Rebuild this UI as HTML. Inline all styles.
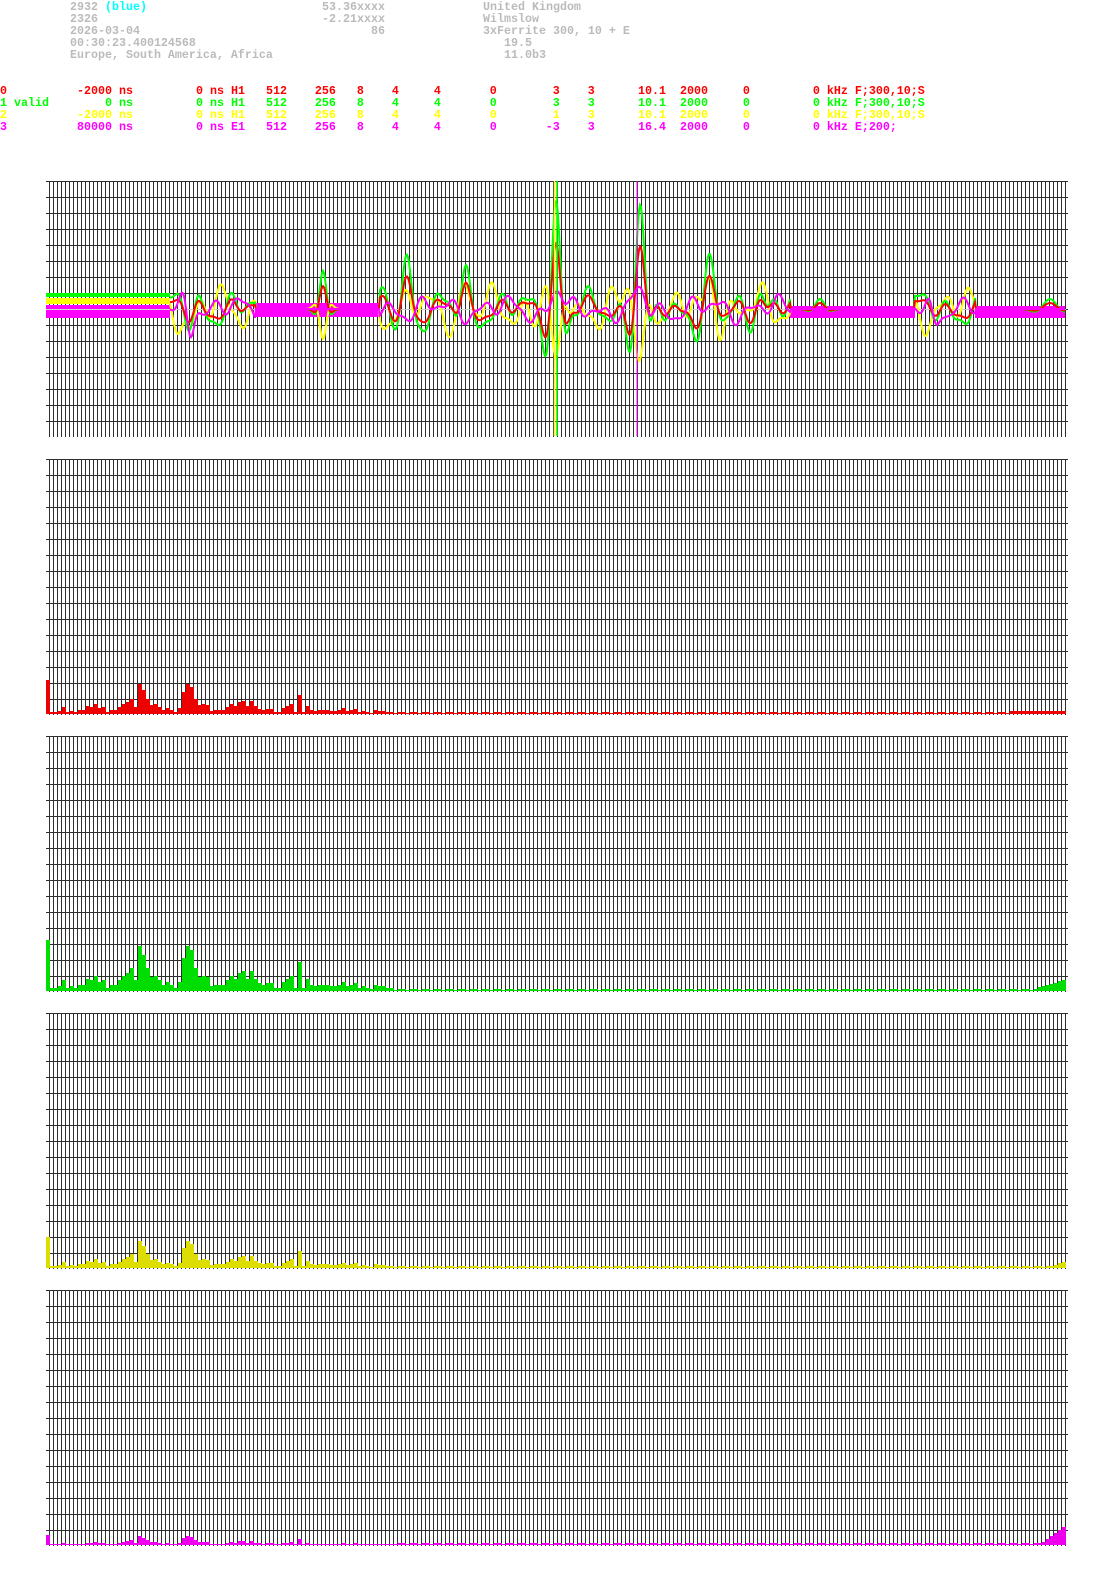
<!DOCTYPE html>
<html><head><meta charset="utf-8"><style>
html,body{margin:0;padding:0;background:#fff;width:1095px;height:1571px;overflow:hidden}
.t{position:absolute;font-family:"Liberation Mono",monospace;font-weight:bold;font-size:11.67px;line-height:12px;white-space:pre}
.g{color:#bbb}
svg{position:absolute;left:0;top:0}
</style></head><body>
<svg id="s" width="1095" height="1571" xmlns="http://www.w3.org/2000/svg"></svg>
<div class="t g" style="left:70px;top:1px">2932 <span style="color:#0ff">(blue)</span>
2326
2026-03-04
00:30:23.400124568
Europe, South America, Africa</div>
<div class="t g" style="left:322px;top:1px">53.36xxxx
-2.21xxxx
       86</div>
<div class="t g" style="left:483px;top:1px">United Kingdom
Wilmslow
3xFerrite 300, 10 + E
   19.5
   11.0b3</div>
<div class="t" style="left:0;top:85px"><span style="color:#f00">0</span>
<span style="color:#0f0">1 valid</span>
<span style="color:#ff0">2</span>
<span style="color:#f0f">3</span></div>
<div class="t" style="left:77px;top:85px;color:#f00">-2000 ns</div>
<div class="t" style="left:77px;top:97px;color:#0f0">    0 ns</div>
<div class="t" style="left:77px;top:109px;color:#ff0">-2000 ns</div>
<div class="t" style="left:77px;top:121px;color:#f0f">80000 ns</div>
<div class="t" style="left:196px;top:85px;color:#f00">0 ns H1   512    256   8    4     4       0        3    3</div>
<div class="t" style="left:196px;top:97px;color:#0f0">0 ns H1   512    256   8    4     4       0        3    3</div>
<div class="t" style="left:196px;top:109px;color:#ff0">0 ns H1   512    256   8    4     4       0        1    3</div>
<div class="t" style="left:196px;top:121px;color:#f0f">0 ns E1   512    256   8    4     4       0       -3    3</div>
<div class="t" style="left:638px;top:85px;color:#f00">10.1  2000     0         0 kHz F;300,10;S</div>
<div class="t" style="left:638px;top:97px;color:#0f0">10.1  2000     0         0 kHz F;300,10;S</div>
<div class="t" style="left:638px;top:109px;color:#ff0">10.1  2000     0         0 kHz F;300,10;S</div>
<div class="t" style="left:638px;top:121px;color:#f0f">16.4  2000     0         0 kHz E;200;</div>
<script>
var s=document.getElementById('s'),o='';
var tops=[181,459,736,1013,1290];
function grid(t){
 var g='';
 for(var x=49;x<=1067;x+=4)g+='M'+(x+.5)+' '+t+'V'+(t+256);
 for(var y=t;y<=t+255;y+=16)g+='M46 '+(y+.5)+'H1068';
 return '<path d="'+g+'" stroke="#2e2e2e" stroke-width="1" fill="none" shape-rendering="crispEdges"/>';
}
tops.forEach(function(t){o+=grid(t)});
var y0=309;
function wav(ev,noise,seed,scale){
 var p=[];
 for(var x=170;x<=1065;x+=1){
  var y=0;
  ev.forEach(function(e){var d=(x-e[0])/e[2];y+=e[1]*Math.exp(-d*d)*Math.cos(2*Math.PI*(x-e[0])/e[3]);});
  if(!((x>255&&x<380)||(x>790&&x<915)||x>975))
  y+=noise*(Math.sin(x*0.21+seed)*0.6+Math.sin(x*0.093+seed*2)*0.5+Math.sin(x*0.37+seed*3)*0.3);
  p.push(x+','+(y0+y*scale).toFixed(1));
 }
 return p.join(' ');
}
var gE=[[556,-105,10,28],[640,-100,11,28],[407,-55,10,30],[323,-38,7,24],[465,-35,9,30],[710,-38,14,30],[760,-22,10,30],[190,15,10,30],[1050,-10,15,40],[820,-10,10,30]];
var yE=[[556,70,10,30],[640,60,12,30],[323,30,7,24],[465,-25,9,30],[710,-30,10,30],[190,18,8,30]];
var mE=[[556,-20,14,40],[640,-15,14,40],[190,20,8,20],[935,12,8,20]];
o+='<rect x="46" y="305" width="124" height="13" fill="#f0f"/><rect x="46" y="298" width="124" height="6" fill="#ff0"/><rect x="46" y="293" width="124" height="4" fill="#0f0"/>';
o+='<rect x="255" y="303" width="125" height="14" fill="#f0f"/><rect x="790" y="306" width="125" height="12" fill="#f0f"/><rect x="975" y="306" width="90" height="12" fill="#f0f"/>';
o+='<line x1="46" y1="309.5" x2="1066" y2="309.5" stroke="#ccc"/>';
o+='<polyline fill="none" stroke="#ff0" stroke-width="2" points="'+wav(yE,20,1.7,1)+'"/>';
o+='<polyline fill="none" stroke="#0f0" stroke-width="2" points="'+wav(gE,17,0.3,1)+'"/>';
o+='<polyline fill="none" stroke="#f00" stroke-width="2" points="'+wav(gE,17,0.3,0.6)+'"/>';
o+='<polyline fill="none" stroke="#f0f" stroke-width="2" points="'+wav(mE,12,4.1,1)+'"/>';
o+='<line x1="554.5" y1="181" x2="554.5" y2="436" stroke="#ff0" stroke-width="1.5"/><line x1="557" y1="181" x2="557" y2="436" stroke="#0f0" stroke-width="1.5"/><line x1="637" y1="181" x2="637" y2="436" stroke="#f0f"/>';
var red=[34,2,2,3,7,2,3,2,4,4,8,7,10,6,7,2,4,4,7,10,12,15,7,30,24,15,9,10,7,4,6,4,2,6,22,30,27,15,9,10,9,3,4,4,4,7,10,8,12,13,8,13,8,5,4,5,5,2,2,6,8,10,2,19,2,8,4,3,4,4,4,3,3,4,6,3,4,5,2,3,2,1,4,3,3,2,2];
function spec(t,col,f,tail){
 var b=t+255,r='';
 for(var i=0;i<255;i++){
  var h=i<red.length?red[i]*f:(1+((i*7)%3)*0.5);
  if(tail)h=Math.max(h,tail(i));
  h=Math.round(h);if(h<1)h=1;
  r+='<rect x="'+(46+i*4)+'" y="'+(b-h)+'" width="4" height="'+h+'" fill="'+col+'"/>';
 }
 return r;
}
o+=spec(459,'#e00',1,function(i){return i>240?3:0});
o+=spec(736,'#0d0',1.5,function(i){return i>245?(i-245)*1.2:0});
o+=spec(1013,'#dd0',0.9,function(i){return i>250?(i-250)*1.5:0});
o+=spec(1290,'#e0e',0.3,function(i){return i>248?(i-248)*3:0});
s.innerHTML=o;
</script>
</body></html>
